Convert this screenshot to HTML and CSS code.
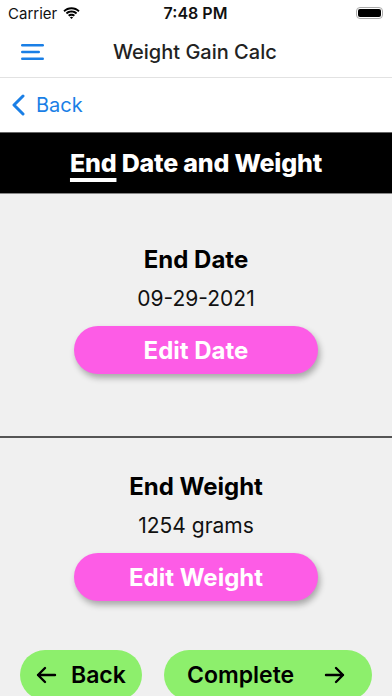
FILE: index.html
```html
<!DOCTYPE html>
<html lang="en">
<head>
    <meta charset="UTF-8">
    <meta name="viewport" content="width=device-width, initial-scale=1.0">
    <title>Weight Gain Calc</title>
    <link rel="stylesheet" href="styles.css">
</head>
<body>
    <div class="status-bar">
        <div class="carrier">
            Carrier
            <svg class="wifi" width="17" height="12" viewBox="0 0 17 12">
                <path d="M8.5 2.2c2.6 0 5 1 6.8 2.7l1.3-1.4C14.5 1.4 11.6.2 8.5.2S2.5 1.4.4 3.5l1.3 1.4C3.5 3.2 5.9 2.2 8.5 2.2z" fill="#000"/>
                <path d="M8.5 5.5c1.7 0 3.2.6 4.4 1.7l1.3-1.4C12.7 4.4 10.7 3.6 8.5 3.6S4.3 4.4 2.8 5.8l1.3 1.4C5.3 6.1 6.8 5.5 8.5 5.5z" fill="#000"/>
                <path d="M8.5 8.7c.9 0 1.6.3 2.2.8l1.3-1.4C11.1 7.3 9.8 6.8 8.5 6.8s-2.6.5-3.5 1.3l1.3 1.4c.6-.5 1.3-.8 2.2-.8z" fill="#000"/>
                <path d="M8.5 12l1.6-1.7c-.4-.4-1-.6-1.6-.6s-1.2.2-1.6.6z" fill="#000"/>
            </svg>
        </div>
        <div class="time">7:48 PM</div>
        <div class="battery"><span></span></div>
    </div>

    <header class="navbar">
        <svg class="menu-icon" width="24" height="16" viewBox="0 0 24 16">
            <rect x="0" y="0" width="23" height="2.4" rx="1.2" fill="#1a7fe6"/>
            <rect x="0" y="6.8" width="19" height="2.4" rx="1.2" fill="#1a7fe6"/>
            <rect x="0" y="13.6" width="23" height="2.4" rx="1.2" fill="#1a7fe6"/>
        </svg>
        <h1>Weight Gain Calc</h1>
    </header>

    <div class="back-row">
        <svg class="chevron" width="14" height="22" viewBox="0 0 14 22">
            <path d="M12 2L3 11l9 9" fill="none" stroke="#1a7fe6" stroke-width="3" stroke-linecap="round" stroke-linejoin="round"/>
        </svg>
        <span>Back</span>
    </div>

    <div class="banner">
        <h2><span class="underlined">End</span> Date and Weight</h2>
    </div>

    <main class="content">
        <section class="field first">
            <h3>End Date</h3>
            <p class="value">09-29-2021</p>
            <button class="edit-btn">Edit Date</button>
        </section>

        <hr class="divider">

        <section class="field second">
            <h3>End Weight</h3>
            <p class="value">1254 grams</p>
            <button class="edit-btn">Edit Weight</button>
        </section>

        <div class="footer-buttons">
            <button class="nav-btn back-btn">
                <svg width="22" height="18" viewBox="0 0 22 18"><path d="M20 9H3M10 2L3 9l7 7" fill="none" stroke="#000" stroke-width="2.4" stroke-linecap="round" stroke-linejoin="round"/></svg>
                Back
            </button>
            <button class="nav-btn complete-btn">
                Complete
                <svg width="22" height="18" viewBox="0 0 22 18"><path d="M2 9h17M12 2l7 7-7 7" fill="none" stroke="#000" stroke-width="2.4" stroke-linecap="round" stroke-linejoin="round"/></svg>
            </button>
        </div>
    </main>
</body>
</html>
```

FILE: styles.css
```css
* {
    box-sizing: border-box;
}

body {
    margin: 0;
    font-family: 'Inter', 'Roboto', sans-serif;
    background-color: #f0f0f0;
    width: 392px;
    height: 696px;
    overflow: hidden;
}

.status-bar {
    height: 26px;
    background: #fff;
    display: flex;
    align-items: center;
    justify-content: space-between;
    padding: 0 9px 0 8px;
    font-size: 15px;
    color: #111;
}

.carrier {
    display: flex;
    align-items: center;
    gap: 6px;
    width: 110px;
}

.time {
    font-size: 16px;
    font-weight: 600;
}

.battery {
    width: 110px;
    display: flex;
    justify-content: flex-end;
}

.battery span {
    display: block;
    width: 27px;
    height: 12px;
    border: 1px solid #aaa;
    border-radius: 4px;
    padding: 1px;
}

.battery span::before {
    content: '';
    display: block;
    width: 100%;
    height: 100%;
    background: #000;
    border-radius: 2px;
}

.navbar {
    height: 52px;
    background: #fff;
    display: flex;
    align-items: center;
    padding-left: 21px;
    border-bottom: 1px solid #e2e2e2;
}

.navbar h1 {
    margin: 0 0 0 68px;
    font-size: 20px;
    font-weight: 500;
    color: #222;
}

.back-row {
    height: 54px;
    background: #fff;
    display: flex;
    align-items: center;
    padding-left: 11px;
    gap: 11px;
    color: #1a7fe6;
    font-size: 20px;
}

.banner {
    height: 62px;
    background: #000;
    border-top: 1px solid #666;
    border-bottom: 1px solid #888;
    display: flex;
    align-items: center;
    justify-content: center;
}

.banner h2 {
    margin: 0;
    color: #fff;
    font-size: 25px;
    font-weight: 800;
    letter-spacing: -0.2px;
}

.underlined {
    text-decoration: underline;
    text-decoration-thickness: 4px;
    text-underline-offset: 6px;
}

.field {
    display: flex;
    flex-direction: column;
    align-items: center;
}

.field.first {
    padding-top: 51px;
}

.field.second {
    padding-top: 34px;
}

.field h3 {
    margin: 0;
    font-size: 24px;
    line-height: 30px;
    font-weight: 700;
    color: #000;
}

.value {
    margin: 11px 0 14px;
    font-size: 21px;
    line-height: 26px;
    color: #111;
}

.edit-btn {
    width: 244px;
    height: 48px;
    border: none;
    border-radius: 24px;
    background-color: #fd5ce6;
    color: #fff;
    font-family: inherit;
    font-size: 24px;
    font-weight: 700;
    box-shadow: 2px 4px 6px rgba(0, 0, 0, 0.3);
}

.divider {
    margin: 62px 0 0;
    border: none;
    height: 2px;
    background: #555;
}

.footer-buttons {
    display: flex;
    gap: 22px;
    padding: 49px 20px 0;
}

.nav-btn {
    height: 50px;
    border: none;
    border-radius: 25px;
    background-color: #8def6c;
    color: #000;
    font-family: inherit;
    font-size: 23px;
    font-weight: 600;
    display: flex;
    align-items: center;
}

.back-btn {
    width: 122px;
    padding-left: 15px;
    gap: 14px;
}

.complete-btn {
    width: 208px;
    padding-left: 23px;
    gap: 30px;
}
```
